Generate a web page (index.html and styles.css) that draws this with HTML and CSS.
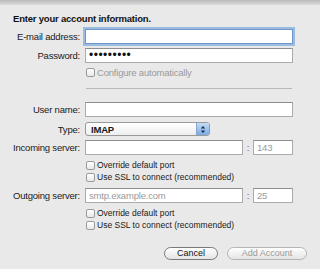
FILE: index.html
```html
<!DOCTYPE html>
<html lang="en">
<head>
  <meta charset="UTF-8">
  <title>Add Account</title>
  <link rel="stylesheet" href="styles.css">
</head>
<body>
  <div class="top-shade"></div>

  <div class="sheet">
    <h3>Enter your account information.</h3>

    <div class="row first">
      <label class="label">E-mail address:</label>
      <div class="field wide focused"></div>
    </div>
    <div class="row">
      <label class="label">Password:</label>
      <div class="field wide dots">&#8226;&#8226;&#8226;&#8226;&#8226;&#8226;&#8226;&#8226;&#8226;</div>
    </div>
    <div class="check-row auto">
      <span class="box"></span><span class="muted">Configure automatically</span>
    </div>

    <div class="separator"></div>

    <div class="row user">
      <label class="label">User name:</label>
      <div class="field wide"></div>
    </div>
    <div class="row type">
      <label class="label">Type:</label>
      <div class="popup">
        <span>IMAP</span>
        <span class="stepper">
          <svg width="6" height="9" viewBox="0 0 6 9"><path d="M0.8 3.6 L3 1 L5.2 3.6Z M0.8 5.4 L3 8 L5.2 5.4Z" fill="#1c2a44"/></svg>
        </span>
      </div>
    </div>
    <div class="row">
      <label class="label">Incoming server:</label>
      <div class="field server"></div>
      <span class="colon">:</span>
      <div class="field port muted">143</div>
    </div>
    <div class="check-row first-check">
      <span class="box"></span><span>Override default port</span>
    </div>
    <div class="check-row">
      <span class="box"></span><span>Use SSL to connect (recommended)</span>
    </div>

    <div class="row outgoing">
      <label class="label">Outgoing server:</label>
      <div class="field server muted">smtp.example.com</div>
      <span class="colon">:</span>
      <div class="field port muted">25</div>
    </div>
    <div class="check-row first-check">
      <span class="box"></span><span>Override default port</span>
    </div>
    <div class="check-row">
      <span class="box"></span><span>Use SSL to connect (recommended)</span>
    </div>

    <div class="buttons">
      <button class="pill cancel">Cancel</button>
      <button class="pill disabled">Add Account</button>
    </div>
  </div>
</body>
</html>
```

FILE: styles.css
```css
body {
  margin: 0;
  background-color: #e9e9e9;
  color: #1a1a1a;
  font-family: "Liberation Sans", Arial, sans-serif;
  font-size: 9.5px;
  letter-spacing: -0.2px;
}
.top-shade {
  height: 5px;
  background: linear-gradient(#b9b9b9, #dcdcdc);
}
h3 {
  margin: 6px 0 0 13px;
  font-size: 9.5px;
  line-height: 16px;
  font-weight: bold;
  color: #111;
}
.row {
  display: flex;
  align-items: center;
  height: 15px;
  margin-top: 4px;
}
.row.first {
  margin-top: 2px;
}
.row.user {
  margin-top: 13px;
}
.row.type {
  margin-top: 5px;
  height: 14px;
}
.row.outgoing {
  margin-top: 5px;
}
.label {
  width: 80px;
  margin-right: 5px;
  text-align: right;
  white-space: nowrap;
  flex-shrink: 0;
}
.field {
  box-sizing: border-box;
  height: 15px;
  background-color: #fff;
  border: 1px solid #ababab;
  border-top-color: #8e8e8e;
  padding: 0 3px;
  line-height: 13px;
  white-space: nowrap;
}
.field.wide {
  width: 208px;
}
.field.dots {
  font-size: 12px;
  letter-spacing: 0.5px;
  line-height: 12px;
  color: #111;
}
.field.focused {
  box-shadow: 0 0 0 2px #9bbbe0;
  border-color: #6f97c8;
}
.field.server {
  width: 158px;
}
.field.port {
  width: 40px;
}
.colon {
  width: 10px;
  text-align: center;
  color: #666;
}
.muted {
  color: #9a9a9a;
}
.popup {
  box-sizing: border-box;
  width: 125px;
  height: 14px;
  display: flex;
  align-items: center;
  justify-content: space-between;
  border: 1px solid #9a9a9a;
  border-radius: 3px;
  background: linear-gradient(#ffffff, #eeeeee);
  padding-left: 5px;
  font-weight: bold;
  overflow: hidden;
}
.stepper {
  width: 12px;
  height: 100%;
  display: flex;
  align-items: center;
  justify-content: center;
  background: linear-gradient(#c4dcf5, #79abe3);
  border-left: 1px solid #86a4cc;
}
.check-row {
  display: flex;
  align-items: center;
  height: 12px;
  margin-left: 86px;
  gap: 2px;
  font-size: 8.5px;
  letter-spacing: 0;
  color: #1a1a1a;
}
.check-row.auto {
  margin-top: 3px;
  font-size: 9.5px;
  letter-spacing: -0.2px;
}
.check-row.first-check {
  margin-top: 4px;
}
.box {
  box-sizing: border-box;
  width: 9px;
  height: 9px;
  border: 1px solid #9a9a9a;
  border-radius: 2px;
  background: linear-gradient(#ffffff, #e8e8e8);
}
.separator {
  height: 1px;
  margin: 10px 0 0 86px;
  width: 206px;
  background-color: #b8b8b8;
}
.buttons {
  display: flex;
  justify-content: flex-end;
  gap: 9px;
  margin-top: 16px;
  padding-right: 13px;
}
.pill {
  box-sizing: border-box;
  height: 13px;
  padding: 0;
  border: 1px solid #7a7a7a;
  border-radius: 7px;
  background: linear-gradient(#ffffff, #e4e4e4);
  font-family: "Liberation Sans", Arial, sans-serif;
  font-size: 9px;
  line-height: 11px;
  color: #111;
}
.pill.cancel {
  width: 54px;
}
.pill.disabled {
  width: 80px;
  border-color: #b5b5b5;
  color: #9a9a9a;
}
```
